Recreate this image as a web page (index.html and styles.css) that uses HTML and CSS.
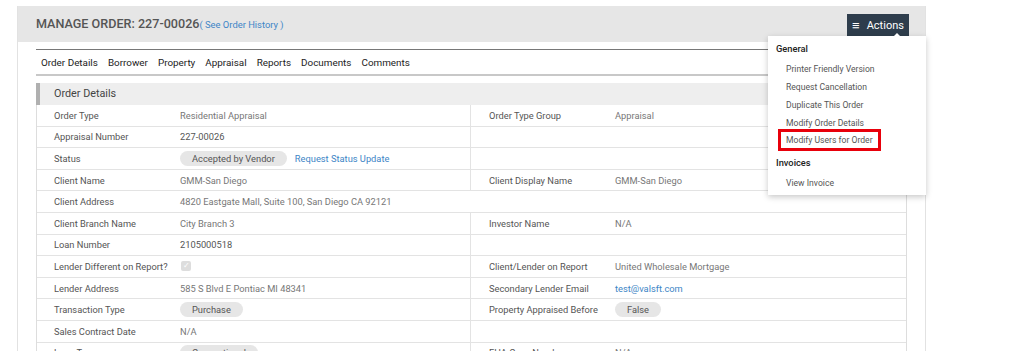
FILE: index.html
```html
<!DOCTYPE html>
<html lang="en">
<head>
<meta charset="UTF-8">
<title>Manage Order</title>
<link rel="stylesheet" href="styles.css">
</head>
<body>
<div class="card">
  <div class="card-header">
    <h1>MANAGE ORDER: 227-00026<a href="#" class="history">( See Order History )</a></h1>
    <div class="actions">
      <button class="actions-btn"><span class="burger">&#8801;</span>Actions</button>
      <div class="menu">
        <div class="menu-title">General</div>
        <a href="#">Printer Friendly Version</a>
        <a href="#">Request Cancellation</a>
        <a href="#">Duplicate This Order</a>
        <a href="#">Modify Order Details</a>
        <a href="#" class="marked">Modify Users for Order</a>
        <div class="menu-title">Invoices</div>
        <a href="#">View Invoice</a>
      </div>
    </div>
  </div>

  <div class="card-body">
    <ul class="tabs">
      <li>Order Details</li>
      <li>Borrower</li>
      <li>Property</li>
      <li>Appraisal</li>
      <li>Reports</li>
      <li>Documents</li>
      <li>Comments</li>
    </ul>

    <div class="section-title">Order Details</div>

    <div class="details">
      <div class="row">
        <div class="cell"><span class="lbl">Order Type</span><span class="val">Residential Appraisal</span></div>
        <div class="cell"><span class="lbl">Order Type Group</span><span class="val">Appraisal</span></div>
      </div>
      <div class="row">
        <div class="cell"><span class="lbl">Appraisal Number</span><span class="val dark">227-00026</span></div>
        <div class="cell"></div>
      </div>
      <div class="row">
        <div class="cell"><span class="lbl">Status</span><span class="val"><span class="pill">Accepted by Vendor</span><a href="#" class="link">Request Status Update</a></span></div>
        <div class="cell"></div>
      </div>
      <div class="row">
        <div class="cell"><span class="lbl">Client Name</span><span class="val">GMM-San Diego</span></div>
        <div class="cell"><span class="lbl">Client Display Name</span><span class="val">GMM-San Diego</span></div>
      </div>
      <div class="row full">
        <div class="cell"><span class="lbl">Client Address</span><span class="val">4820 Eastgate Mall, Suite 100, San Diego CA 92121</span></div>
      </div>
      <div class="row">
        <div class="cell"><span class="lbl">Client Branch Name</span><span class="val">City Branch 3</span></div>
        <div class="cell"><span class="lbl">Investor Name</span><span class="val">N/A</span></div>
      </div>
      <div class="row">
        <div class="cell"><span class="lbl">Loan Number</span><span class="val dark">2105000518</span></div>
        <div class="cell"></div>
      </div>
      <div class="row">
        <div class="cell"><span class="lbl">Lender Different on Report?</span><span class="val"><span class="check">&#10003;</span></span></div>
        <div class="cell"><span class="lbl">Client/Lender on Report</span><span class="val">United Wholesale Mortgage</span></div>
      </div>
      <div class="row">
        <div class="cell"><span class="lbl">Lender Address</span><span class="val">585 S Blvd E Pontiac MI 48341</span></div>
        <div class="cell"><span class="lbl">Secondary Lender Email</span><span class="val"><a href="#" class="link">test@valsft.com</a></span></div>
      </div>
      <div class="row">
        <div class="cell"><span class="lbl">Transaction Type</span><span class="val"><span class="pill">Purchase</span></span></div>
        <div class="cell"><span class="lbl">Property Appraised Before</span><span class="val"><span class="pill">False</span></span></div>
      </div>
      <div class="row">
        <div class="cell"><span class="lbl">Sales Contract Date</span><span class="val">N/A</span></div>
        <div class="cell"></div>
      </div>
      <div class="row">
        <div class="cell"><span class="lbl">Loan Type</span><span class="val"><span class="pill">Conventional</span></span></div>
        <div class="cell"><span class="lbl">FHA Case Number</span><span class="val">N/A</span></div>
      </div>
    </div>
  </div>
</div>
</body>
</html>
```

FILE: styles.css
```css
body {
  margin: 0;
  font-family: Roboto, "Liberation Sans", Arial, sans-serif;
  background-color: #fff;
  color: #555;
  overflow: hidden;
}
a {
  text-decoration: none;
}
.card {
  width: 907px;
  margin: 6px 0 0 17px;
  border-left: 1px solid #e2e2e2;
  border-right: 1px solid #e2e2e2;
  min-height: 400px;
}
.card-header {
  position: relative;
  height: 36px;
  background-color: #e6e6e6;
  display: flex;
  align-items: center;
  justify-content: space-between;
  padding: 0 16px 0 18px;
}
h1 {
  margin: 0 0 1px;
  font-size: 12.6px;
  font-weight: 500;
  color: #555;
}
.history {
  font-size: 9.4px;
  font-weight: 400;
  color: #3d85c6;
}
.actions {
  position: relative;
  margin-top: 3px;
}
.actions-btn {
  height: 23px;
  width: 62px;
  padding: 0;
  border: none;
  background-color: #2e3d4c;
  color: #fff;
  font-family: inherit;
  font-size: 11px;
  display: flex;
  align-items: center;
  justify-content: center;
  gap: 7px;
}
.burger {
  font-size: 13px;
  line-height: 1;
}
.actions-btn::after {
  content: "";
  position: absolute;
  left: 45px;
  top: 19px;
  border: 5px solid transparent;
  border-bottom-color: #fff;
  border-top: none;
  z-index: 3;
}
.menu {
  position: absolute;
  top: 22px;
  right: -17px;
  width: 158px;
  padding: 4px 0 3px;
  background-color: #fff;
  box-shadow: 0 2px 6px rgba(0, 0, 0, 0.22);
  z-index: 2;
  display: flex;
  flex-direction: column;
}
.menu-title {
  font-size: 9.3px;
  font-weight: 500;
  color: #222;
  padding: 0 8px;
  line-height: 18px;
}
.menu-title + a {
  margin-top: 2px;
}
.menu a {
  display: block;
  font-size: 8.6px;
  color: #555;
  line-height: 18px;
  padding: 0 18px;
  white-space: nowrap;
}
.menu a.marked {
  align-self: flex-start;
  width: 87px;
  margin: -3px 0 3px 10px;
  padding: 0 5px;
  line-height: 16px;
  border: 3px solid #e8000b;
}
.card-body {
  padding: 7px 18px 0 18px;
}
.tabs {
  list-style: none;
  margin: 0;
  padding: 0 5px;
  height: 24px;
  border-top: 1px solid #777;
  border-bottom: 2px solid #c8c8c8;
  display: flex;
  align-items: center;
  gap: 10px;
  font-size: 9.9px;
  color: #222;
}
.section-title {
  margin-top: 7px;
  height: 22px;
  line-height: 22px;
  background-color: #eee;
  border-left: 4px solid #b0b0b0;
  padding-left: 14px;
  font-size: 10.8px;
  color: #444;
}
.details {
  border-left: 1px solid #ddd;
  border-right: 1px solid #ddd;
  font-size: 9.3px;
}
.row {
  display: grid;
  grid-template-columns: 433px 1fr;
  height: 21.6px;
  box-sizing: border-box;
  border-bottom: 1px solid #e3e3e3;
}
.row.full {
  grid-template-columns: 1fr;
}
.cell {
  display: flex;
  align-items: center;
  padding-left: 17px;
}
.cell + .cell {
  border-left: 1px solid #e3e3e3;
  padding-left: 18px;
}
.lbl {
  width: 126px;
  flex-shrink: 0;
  color: #555;
}
.val {
  color: #777;
  display: flex;
  align-items: center;
}
.val.dark {
  color: #555;
}
.pill {
  display: inline-block;
  background-color: #e6e6e6;
  color: #555;
  border-radius: 8px;
  padding: 0 12px;
  line-height: 15px;
  margin-right: 8px;
}
.link {
  color: #3d85c6;
}
.check {
  width: 10px;
  height: 10px;
  margin-left: 1px;
  border-radius: 2px;
  background-color: #ddd;
  color: #fff;
  font-size: 8px;
  line-height: 10px;
  text-align: center;
}
```
